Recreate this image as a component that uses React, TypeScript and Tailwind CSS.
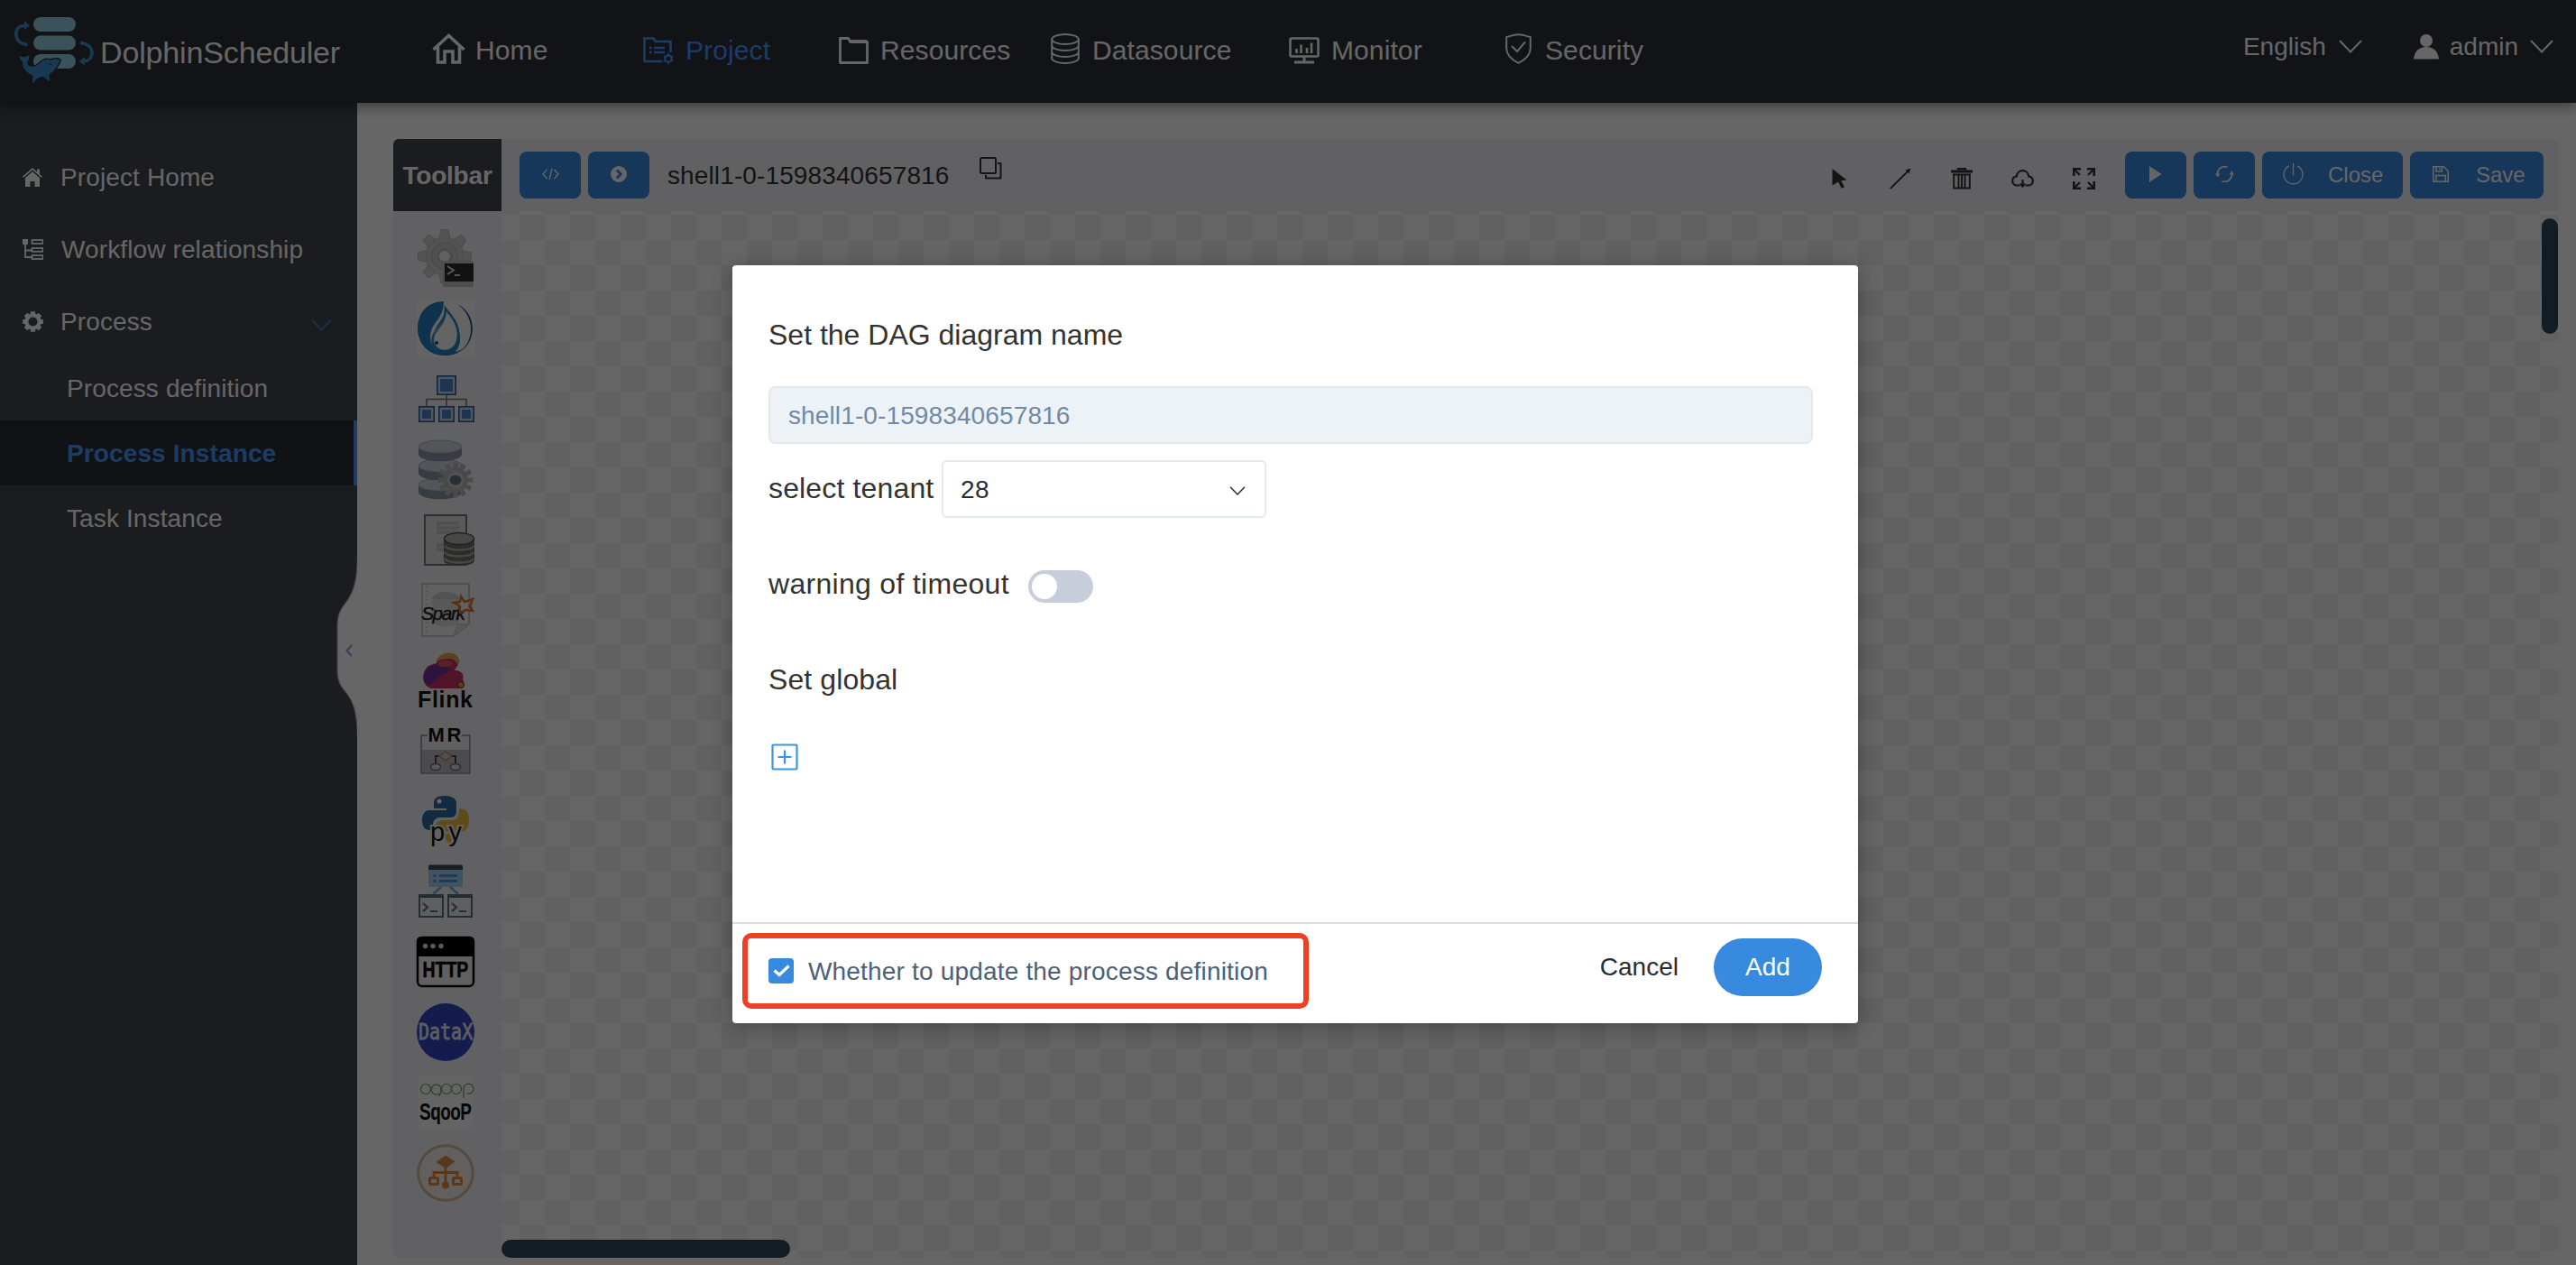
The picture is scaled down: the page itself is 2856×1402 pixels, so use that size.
import React from "react";

type IconProps = { className?: string };

/* ---------- Brand ---------- */

function LogoMark({ className }: IconProps) {
  return (
    <svg className={className} viewBox="0 0 88 76" fill="none">
      <rect x="21" y="0" width="47" height="16" rx="8" fill="#97cce3" />
      <rect x="21" y="20.5" width="47" height="16" rx="8" fill="#97cce3" />
      <rect x="21" y="41" width="47" height="16" rx="8" fill="#97cce3" />
      <path d="M14.5 30.500C5 29.500 1.800 24 1.800 18.500 1.800 13 5 9.500 11 9.500" stroke="#3a92cd" strokeWidth="3.600" />
      <path d="M11 4l6 5.500-6 4.500z" fill="#3a92cd" />
      <path d="M73 28.500c8.500.800 13 5 13 11s-4 9-9 9.500" stroke="#3a92cd" strokeWidth="3.600" />
      <path d="M78 44l-6.500 5L78 53.500z" fill="#3a92cd" />
      <path
        d="M4.500 41.500C8 44 13 44 17 41c.500 4.500-.500 7.500-2.500 10 2.500 4.500 8 4 12 .500 4-4.500 9-6.500 14-4.500 4-2 8.500-1.500 11 .500-1.500 5-4.500 8-7 12-3.500 4-10.500 7-17 8-4 2-6 5.500-7.500 7.500-1-3.500-.800-6.500 0-9.500C12 62 7.500 55.500 8.500 50 6 48 4.500 45 4.500 41.500z"
        fill="#3a92cd"
        stroke="#2d303a"
        strokeWidth="1.400"
      />
      <path d="M32 66.500l7 4.500-.5-8z" fill="#3a92cd" />
      <circle cx="40" cy="52" r="1" fill="#2d303a" />
    </svg>
  );
}

/* ---------- Header icons ---------- */

function HomeIcon({ className }: IconProps) {
  return (
    <svg className={className} viewBox="0 0 37 34" fill="none" stroke="currentColor" strokeWidth="3.600">
      <path d="M1.500 18L18.500 2.500 35.500 18" />
      <path d="M6.500 15v17H14V20h9v12h7.500V15" />
    </svg>
  );
}

function ProjectIcon({ className }: IconProps) {
  return (
    <svg className={className} viewBox="0 0 34 30" fill="none" stroke="currentColor" strokeWidth="2.600">
      <path d="M21 27H1.500V1.500h10L14 5h16.500v12" />
      <path d="M7 12h2.500M12 12h12M7 17h2.500M12 17h12" />
      <circle cx="28" cy="24" r="3.600" strokeWidth="2.200" />
      <path d="M28 18v2.500M28 27.500V30M22.800 21l2.200 1.300M31 25.700l2.300 1.300M22.800 27l2.200-1.300M31 22.300l2.300-1.300" strokeWidth="2" />
    </svg>
  );
}

function FolderIcon({ className }: IconProps) {
  return (
    <svg className={className} viewBox="0 0 33 30" fill="none" stroke="currentColor" strokeWidth="2.800" strokeLinejoin="round">
      <path d="M1.500 1.500h9l2.500 4h18.500v23h-30z" />
      <path d="M11 4.500h20" />
    </svg>
  );
}

function DatabaseIcon({ className }: IconProps) {
  return (
    <svg className={className} viewBox="0 0 32 34" fill="none" stroke="currentColor" strokeWidth="2">
      <ellipse cx="16" cy="6.500" rx="14.800" ry="5.500" />
      <path d="M1.200 6.500v21c0 3 6.600 5.500 14.800 5.500s14.800-2.500 14.800-5.500v-21M1.200 13.500c0 3 6.600 5.500 14.800 5.500s14.800-2.500 14.800-5.500M1.200 20.500c0 3 6.600 5.500 14.800 5.500s14.800-2.500 14.800-5.500" />
    </svg>
  );
}

function MonitorIcon({ className }: IconProps) {
  return (
    <svg className={className} viewBox="0 0 34 30" fill="none" stroke="currentColor" strokeWidth="2.600">
      <rect x="1.500" y="1.500" width="31" height="20" rx="1.500" />
      <path d="M17 22v5M6 28h22" strokeWidth="3" />
      <path d="M8.500 18v-5M13.500 18V8.500M20 18v-6M25 18V6.500" />
    </svg>
  );
}

function ShieldIcon({ className }: IconProps) {
  return (
    <svg className={className} viewBox="0 0 29 34" fill="none" stroke="currentColor" strokeWidth="2">
      <path d="M14.500 1.200c4.500 0 8.500 1.500 13.300 3v12.300c0 7-5.500 12.500-13.300 16.300C6.700 29 1.200 23.500 1.200 16.500V4.200c4.800-1.500 8.800-3 13.300-3z" />
      <path d="M7 14l6 6 9-10.500" />
    </svg>
  );
}

function Chevron({ className, width = 2 }: IconProps & { width?: number }) {
  return (
    <svg className={className} viewBox="0 0 26 15" fill="none" stroke="currentColor" strokeWidth={width}>
      <path d="M1 1l12 12.500L25 1" />
    </svg>
  );
}

function UserIcon({ className }: IconProps) {
  return (
    <svg className={className} viewBox="0 0 28 28" fill="currentColor">
      <circle cx="14" cy="7" r="7" />
      <path d="M0 27.500C.800 19 6 14 14 14s13.200 5 14 13.500z" />
    </svg>
  );
}

/* ---------- Sidebar icons ---------- */

function SmallHomeIcon({ className }: IconProps) {
  return (
    <svg className={className} viewBox="0 0 22 21" fill="currentColor">
      <path d="M11 0l5 4.500V1.500h3v5.600l3 2.700-1 1.200L11 2.300 1 11 0 9.800z" />
      <path d="M11 4.200l8 7V21h-5.500v-6h-5v6H3v-9.800z" />
    </svg>
  );
}

function TreeIcon({ className }: IconProps) {
  return (
    <svg className={className} viewBox="0 0 23 23" fill="none" stroke="currentColor" strokeWidth="1.800">
      <rect x="0" y="0" width="6" height="6" fill="currentColor" stroke="none" />
      <path d="M3 6v14h7M3 12.500h7" />
      <rect x="10.500" y="1" width="12" height="4" />
      <rect x="10.500" y="10" width="12" height="3.800" />
      <rect x="10.500" y="18" width="12" height="4" />
    </svg>
  );
}

function GearIcon({ className }: IconProps) {
  return (
    <svg className={className} viewBox="-11.500 -11.500 23 23" fill="none" stroke="currentColor">
      <circle r="7.200" strokeWidth="4.200" />
      {[0, 45, 90, 135].map((a) => (
        <path key={a} d="M0-11.300v3.500M0 7.800v3.500" strokeWidth="5.200" transform={`rotate(${a})`} />
      ))}
    </svg>
  );
}

/* ---------- Canvas bar icons ---------- */

function CopyIcon({ className }: IconProps) {
  return (
    <svg className={className} viewBox="0 0 25 25" fill="none" stroke="currentColor" strokeWidth="2" strokeLinejoin="round">
      <rect x="1" y="1" width="17" height="17" rx="1.500" />
      <path d="M20 7h3.500v16.500H7V20" />
    </svg>
  );
}

function CursorIcon({ className }: IconProps) {
  return (
    <svg className={className} viewBox="0 0 17 22" fill="currentColor">
      <path d="M.500 0L16.500 12.500l-6.300.800 3.800 7-3.300 1.500-3.600-7.300L.500 18.500z" />
    </svg>
  );
}

function LineIcon({ className }: IconProps) {
  return (
    <svg className={className} viewBox="0 0 24 24" fill="none" stroke="currentColor" strokeWidth="1.800">
      <path d="M.800 23L20 4" />
      <path d="M23.500.500l-2 6-4-4z" fill="currentColor" stroke="none" />
    </svg>
  );
}

function TrashIcon({ className }: IconProps) {
  return (
    <svg className={className} viewBox="0 0 24 24" fill="none" stroke="currentColor" strokeWidth="2.400">
      <path d="M0 4h24" strokeWidth="3" />
      <path d="M8 2.500V1h8v1.500" />
      <path d="M3.200 7.500v15h17.600v-15M8.500 7.500V22M12 7.500V22M15.500 7.500V22M2 7.500h20" strokeWidth="2" />
    </svg>
  );
}

function CloudDownIcon({ className }: IconProps) {
  return (
    <svg className={className} viewBox="0 0 25 21" fill="none" stroke="currentColor" strokeWidth="2.200">
      <path d="M9.500 17.500H6.500C3.500 17.500 1.200 15.400 1.200 12.500c0-2.700 2-4.700 4.600-5C6 3.800 8.800 1.200 12.500 1.200s6.500 2.600 6.700 6.300c2.600.300 4.600 2.300 4.600 5 0 2.900-2.300 5-5.300 5h-3" />
      <path d="M12.500 11v6" />
      <path d="M8.800 15.500h7.400l-3.700 5z" fill="currentColor" stroke="none" />
    </svg>
  );
}

function ExpandIcon({ className }: IconProps) {
  return (
    <svg className={className} viewBox="0 0 25 24" fill="none" stroke="currentColor" strokeWidth="2.600">
      <path d="M1.300 9V1.300H9M16 1.300h7.700V9M1.300 15v7.700H9M16 22.700h7.700V15" />
      <path d="M2 2l6 6M23 2l-6 6M2 22l6-6M23 22l-6-6" strokeWidth="2.200" />
    </svg>
  );
}

function CodeIcon({ className }: IconProps) {
  return (
    <svg className={className} viewBox="0 0 19 14" fill="none" stroke="currentColor" strokeWidth="1.300">
      <path d="M5.500 2L1 7l4.500 5M13.500 2L18 7l-4.500 5M11 1L8 13" />
    </svg>
  );
}

function CircleArrowIcon({ className }: IconProps) {
  return (
    <svg className={className} viewBox="0 0 18 18">
      <circle cx="9" cy="9" r="9" fill="currentColor" />
      <path d="M6.800 4.500L11.300 9l-4.500 4.500" fill="none" stroke="#388ade" strokeWidth="2.800" />
    </svg>
  );
}

function PlayIcon({ className }: IconProps) {
  return (
    <svg className={className} viewBox="0 0 14 18" fill="currentColor">
      <path d="M0 0l13.500 9L0 18z" />
    </svg>
  );
}

function RefreshIcon({ className }: IconProps) {
  return (
    <svg className={className} viewBox="0 0 21 18" fill="none" stroke="currentColor" strokeWidth="1.600">
      <path d="M13.500 1.200A8 8 0 0 0 2.700 10M7.500 16.800A8 8 0 0 0 18.300 8" />
      <path d="M0 8.500h5.400L2.700 12.500zM15.600 9.500H21L18.300 5.500z" fill="currentColor" stroke="none" />
    </svg>
  );
}

function PowerIcon({ className }: IconProps) {
  return (
    <svg className={className} viewBox="0 0 23 24" fill="none" stroke="currentColor" strokeWidth="1.300">
      <path d="M7 2.800a10.500 10.500 0 1 0 9 0M11.500 0v13.500" />
    </svg>
  );
}

function SaveIcon({ className }: IconProps) {
  return (
    <svg className={className} viewBox="0 0 18 18" fill="none" stroke="currentColor" strokeWidth="1.500">
      <path d="M.800.800h11.700l4.700 4.700v11.700H.800z" />
      <path d="M4 1v5h6.500V1M8 2v2.500M3.800 17v-6.500h10.400V17" />
    </svg>
  );
}

/* ---------- Task type icons (64 x 64) ---------- */

const sans = '"Liberation Sans", Arial, sans-serif';
const mono = '"DejaVu Sans Mono", monospace';

function ShellTask() {
  return (
    <g>
      <g transform="translate(31 30)">
        <circle r="22" fill="#d0d0d0" />
        {[0, 45, 90, 135, 180, 225, 270, 315].map((a) => (
          <path key={a} d="M-6-20l2-9.500h8L6-20z" fill="#d0d0d0" stroke="#bbb" transform={`rotate(${a})`} />
        ))}
        <circle r="15" fill="#c8c8c8" stroke="#b4b4b4" />
        <circle r="7.500" fill="#f3f3f7" stroke="#bcbcbc" strokeWidth="3" />
      </g>
      <rect x="29" y="35" width="34" height="29" rx="2" fill="#c0c0c0" />
      <rect x="31" y="38" width="32" height="20" fill="#2e2e2e" />
      <path d="M34 41l7 4.500-7 4.500M42 51h6" stroke="#d8d8d8" strokeWidth="2" fill="none" />
    </g>
  );
}

function WaterdropTask() {
  return (
    <g>
      <rect width="64" height="64" rx="6" fill="#fbfbfb" />
      <path d="M30 2C12 2 1 15 1 32c0 17 12 30 30 30C47 62 50 47 47 35 45 25 37 16 31 8c2 10-6 16-10 24-5 10-3 20 3 25-6-4-11-12-8-22C19 24 30 20 30 2z" fill="#2a7fc0" />
      <path d="M32 10c6 8 14 16 14 28s-6 18-14 19-16-6-14-15c2-10 14-14 14-32z" fill="#fbfbfb" stroke="#2a86c6" strokeWidth="2.500" />
      <path d="M29 20c-1 7-9 12-11 20 4-3 10-9 11-20z" fill="#58a6da" />
      <circle cx="22" cy="48" r="2" fill="#1b5288" />
      <path d="M45 5c21 10 23 40 3 53 17-14 16-40-3-53z" fill="#24568a" />
      <path d="M24 61c12 3 22 0 29-8-8 6-18 7-29 8z" fill="#2a7fc0" />
    </g>
  );
}

function TreeTask() {
  const box = (x: number, y: number, s: number) => (
    <g key={`${x}-${y}`}>
      <rect x={x} y={y} width={s} height={s} fill="#2c5d98" />
      <rect x={x + 1.600} y={y + 1.600} width={s - 3.200} height={s - 3.200} fill="#c3daf2" />
      <rect x={x + 4} y={y + 4} width={s - 8} height={s - 8} fill="#4a86cb" />
    </g>
  );
  return (
    <g>
      <path d="M33 27v14M11 41v-8.500h44V41" stroke="#7a746c" strokeWidth="1.600" fill="none" />
      {box(22, 6, 22)}
      {box(2, 40, 18)}
      {box(24, 40, 18)}
      {box(46, 40, 18)}
    </g>
  );
}

function ProcedureTask() {
  const disk = (y: number) => (
    <g key={y}>
      <path d={`M2 ${y}v8c0 11 48 11 48 0v-8z`} fill="#8796a6" />
      <ellipse cx="26" cy={y} rx="24" ry="7" fill="#cdd6df" stroke="#a7b3bf" />
    </g>
  );
  return (
    <g>
      {[49, 28, 7].map(disk)}
      <g transform="translate(43 44)" fill="#b9b9b9">
        {[0, 30, 60, 90, 120, 150, 180, 210, 240, 270, 300, 330].map((a) => (
          <rect key={a} x="-2.500" y="-19.500" width="5" height="9" transform={`rotate(${a})`} />
        ))}
        <circle r="14" />
        <circle r="9" fill="#d0d0d0" />
        <ellipse rx="6.500" ry="5.500" fill="#62798f" />
      </g>
    </g>
  );
}

function SqlTask() {
  return (
    <g>
      <rect x="9" y="5" width="46" height="55" fill="#e0e0e0" stroke="#777" strokeWidth="2" />
      <path d="M22 14h26M22 19h26M22 24h26M22 38h8M22 43h8" stroke="#c9c9c9" strokeWidth="4" />
      <path d="M30 31v24c0 8 34 8 34 0V31z" fill="#6e6e68" />
      <path d="M31 39c4 6 29 6 32 0M31 46c4 6 29 6 32 0M31 53c4 6 29 6 32 0" stroke="#b0b0a8" strokeWidth="2.500" fill="none" />
      <ellipse cx="47" cy="31" rx="16.500" ry="6.500" fill="#b5b5ae" stroke="#555" strokeWidth="1.500" />
    </g>
  );
}

function SparkTask() {
  return (
    <g>
      <path d="M6 3h52v45L41 61H6z" fill="#f2f2f2" stroke="#b8b8b8" strokeWidth="1.500" />
      <path d="M58 48H45l-4 13" fill="#dcdcdc" stroke="#c3c3c3" />
      <path d="M11 5v54" stroke="#bdbdbd" strokeDasharray="2 3" />
      <ellipse cx="32" cy="20" rx="15" ry="8" fill="#cccccc" />
      <path d="M17 20v25c0 7 30 7 30 0V20z" fill="#dcdcdc" />
      <text x="5" y="43" fontFamily={sans} fontSize="21" fontStyle="italic" fill="#1f1f1f" stroke="#1f1f1f" strokeWidth=".4" textLength="49">
        Spark
      </text>
      <path d="M49 17l4 6 9-3-3 8 3 5-8-1-6 3-1-8-6-3 7-1z" fill="none" stroke="#e0742c" strokeWidth="2.500" />
    </g>
  );
}

function FlinkTask() {
  return (
    <g>
      <path d="M16 41C8 39 5 30 9 21c3-6 9-7 13-8 1-8 8-12 16-11 7 1 10 6 8 12-1 3-3 4-4 7 8 0 11 5 9 10 3 4 1 10-6 10z" fill="#c73464" />
      <path d="M8 33c-2-10 4-18 13-18 8 0 12 4 18 3-3 6-10 6-13 9-4 3-6 8-14 10z" fill="#74309c" />
      <path d="M22 11c2-8 10-10 16-9 8 1 10 7 8 14-2-6-6-8-10-8-5 0-9 1-14 3z" fill="#e3a44a" />
      <path d="M24 12c6-3 13-3 16 1-2 5-8 5-16 3z" fill="#df5462" />
      <circle cx="49" cy="37" r="3.500" fill="#d9a13c" stroke="#5c1a34" />
      <text x="1" y="62" fontFamily={sans} fontSize="25" fontWeight="bold" fill="#111" textLength="61">
        Flink
      </text>
    </g>
  );
}

function MapReduceTask() {
  return (
    <g>
      <rect x="5" y="15" width="54" height="42" fill="#b9bac6" stroke="#8f8fa3" strokeWidth="1.500" />
      <rect x="6" y="16" width="52" height="15" fill="#eeeef2" />
      <rect x="12" y="5" width="38" height="20" fill="#f0f0f4" />
      <text x="12.500" y="22" fontFamily={sans} fontSize="22" fontWeight="bold" fill="#111" textLength="37">
        MR
      </text>
      <path d="M21 46V38h22v8" stroke="#4a4a54" strokeWidth="2" fill="none" />
      <path d="M32 33l7 5-7 5-7-5z" fill="#c9c9d2" stroke="#b98a5c" strokeWidth="1.500" />
      <ellipse cx="21" cy="50" rx="5.500" ry="3.600" fill="#dcdce4" stroke="#6c6c78" strokeWidth="1.500" />
      <ellipse cx="43" cy="50" rx="5.500" ry="3.600" fill="#dcdce4" stroke="#6c6c78" strokeWidth="1.500" />
    </g>
  );
}

function PythonTask() {
  return (
    <g>
      <path
        d="M31 4c-9 0-12 3-12 8v6h14v2H14C8 20 6 26 6 31c0 6 2 10 7 11h5v-6c0-5 4-8 8-8h12c4 0 6-3 6-7v-9c0-5-5-8-13-8z"
        fill="#2f6ba3"
      />
      <circle cx="25" cy="10" r="2.500" fill="#fff" />
      <path d="M47 18c8 0 11 5 11 13 0 7-3 13-10 13H30c-5 0-8-3-10-6 2-5 5-7 9-7h10c6 0 8-5 8-13z" fill="#e8bd3e" />
      <path d="M28 46h14l-6 12z" fill="#e8bd3e" />
      <text x="15" y="54" fontFamily={sans} fontSize="29" fill="#111" stroke="#f3f3f7" strokeWidth="4" paintOrder="stroke" textLength="35" aria-hidden>
        py
      </text>
    </g>
  );
}

function ConditionTask() {
  const term = (x: number) => (
    <g key={x}>
      <rect x={x + 1} y="36" width="26" height="24" fill="#e9edef" stroke="#5b727d" strokeWidth="2" />
      <path d={`M${x} 37h28`} stroke="#5b727d" strokeWidth="4" />
      <path d={`M${x + 5} 45l5 4.500-5 4.500M${x + 13} 54h8`} stroke="#5b727d" strokeWidth="2.200" fill="none" />
    </g>
  );
  return (
    <g>
      <rect x="13" y="3" width="38" height="24" rx="2" fill="#a9cdee" />
      <path d="M13 8V4.500A2 2 0 0 1 15 2.500h34a2 2 0 0 1 2 2V8z" fill="#3b4f5a" />
      <path d="M18.500 14.500h3M25 14.500h20M18.500 20.500h3M25 20.500h20" stroke="#3f8bd6" strokeWidth="2.600" />
      <path d="M27 27l-9 8M37 27l9 8" stroke="#6cabe4" strokeWidth="2.600" />
      {term(2)}
      {term(34)}
    </g>
  );
}

function HttpTask() {
  return (
    <g>
      <rect x="1" y="5" width="62" height="54" rx="5" fill="#efefef" stroke="#000" strokeWidth="2.500" />
      <path d="M0 26V9a5 5 0 0 1 5-5h54a5 5 0 0 1 5 5v17z" fill="#000" />
      <g fill="#e6e6e6">
        <circle cx="9.500" cy="14.500" r="2.700" />
        <circle cx="18" cy="14.500" r="2.700" />
        <circle cx="27" cy="14.500" r="2.700" />
      </g>
      <g transform="translate(6.500 49) scale(1 1.270)">
        <text fontFamily={sans} fontSize="19.500" fontWeight="bold" fill="#000" stroke="#000" strokeWidth=".4">
          HTTP
        </text>
      </g>
    </g>
  );
}

function DataxTask() {
  return (
    <g>
      <circle cx="32" cy="32" r="32" fill="#3448c0" />
      <g transform="translate(2 40) scale(1 1.250)">
        <text fontFamily={mono} fontSize="20" fill="#e9e9f4" stroke="#e9e9f4" strokeWidth=".6">
          DataX
        </text>
      </g>
    </g>
  );
}

function SqoopTask() {
  return (
    <g>
      <rect x="2" y="2" width="60" height="60" fill="#fbfbfb" />
      <g fill="none" stroke="#5da45d" strokeWidth="1.200">
        <circle cx="10" cy="17" r="5.500" />
        <path d="M25 22a5.500 5.500 0 1 1 1-8c2 3 1 7-1 11" />
        <circle cx="33" cy="17" r="5.500" />
        <circle cx="44" cy="17" r="5.500" />
        <path d="M52 27V17a5.500 5.500 0 1 1 4 5" />
      </g>
      <g transform="translate(3 51) scale(1 1.350)">
        <text fontFamily={sans} fontSize="19" fontWeight="bold" fill="#0c0c0c" textLength="58">
          SqooP
        </text>
      </g>
    </g>
  );
}

function DependentTask() {
  return (
    <g>
      <circle cx="32" cy="32" r="30.300" fill="#f3efee" stroke="#d8b79c" strokeWidth="3" />
      <path d="M32 12.500l10.500 7L32 27l-10.500-7z" fill="#e18a45" />
      <path d="M32 25v20M19 37v-5.500h26V37" stroke="#e18a45" strokeWidth="2.800" fill="none" />
      <circle cx="32" cy="45.500" r="4" fill="#e18a45" />
      <rect x="14.500" y="37.500" width="9" height="7" fill="none" stroke="#e18a45" strokeWidth="3" rx="1" />
      <rect x="40.500" y="37.500" width="9" height="7" fill="none" stroke="#e18a45" strokeWidth="3" rx="1" />
    </g>
  );
}

const tasks = [
  ShellTask,
  WaterdropTask,
  TreeTask,
  ProcedureTask,
  SqlTask,
  SparkTask,
  FlinkTask,
  MapReduceTask,
  PythonTask,
  ConditionTask,
  HttpTask,
  DataxTask,
  SqoopTask,
  DependentTask,
];

/* ---------- Page sections ---------- */

function Header() {
  return (
    <header className="relative z-10 flex h-[114px] shrink-0 items-start bg-[#2d303a] text-white shadow-[0_4px_14px_rgba(0,0,0,0.43)]">
      <div className="flex w-[479px] shrink-0 pl-4 pt-[19px]">
        <LogoMark className="h-[76px] w-[88px]" />
        <span className="ml-[7px] mt-[20px] text-[34px] leading-[38px] tracking-[-0.15px]">DolphinScheduler</span>
      </div>
      <nav className="flex h-[112px] items-center text-[30px] tracking-[0.1px]">
        <a className="flex w-[234px] items-center">
          <HomeIcon className="mr-[11px] mt-[-4px] h-[34px] w-[37px]" />
          Home
        </a>
        <a className="flex w-[217px] items-center text-[#4697fb]">
          <ProjectIcon className="mr-[13px] h-[30px] w-[34px]" />
          Project
        </a>
        <a className="flex w-[235px] items-center">
          <FolderIcon className="mr-[13px] h-[30px] w-[33px]" />
          Resources
        </a>
        <a className="flex w-[264px] items-center">
          <DatabaseIcon className="mr-[14px] mt-[-4px] h-[34px] w-8" />
          Datasource
        </a>
        <a className="flex w-[240px] items-center">
          <MonitorIcon className="mr-[13px] h-[30px] w-[34px]" />
          Monitor
        </a>
        <a className="flex items-center">
          <ShieldIcon className="mr-[15px] mt-[-4px] h-[34px] w-[29px]" />
          Security
        </a>
      </nav>
      <div className="ml-auto flex h-[103px] items-center pr-[25px] text-[28px]">
        <span>English</span>
        <Chevron className="ml-[14px] h-[15px] w-[26px]" />
        <UserIcon className="ml-[57px] h-7 w-7" />
        <span className="ml-[12px]">admin</span>
        <Chevron className="ml-[13px] h-[15px] w-[26px]" />
      </div>
    </header>
  );
}

function Sidebar() {
  return (
    <aside className="relative w-[396px] shrink-0 bg-[#43464e] pt-[42px] text-[28px] tracking-[0.12px] text-white">
      <a className="flex h-20 items-center pl-[25px]">
        <SmallHomeIcon className="mr-[20px] h-[21px] w-[22px]" />
        <span className="pt-[2px]">Project Home</span>
      </a>
      <a className="flex h-20 items-center pl-[25px]">
        <TreeIcon className="mr-[20px] h-[23px] w-[23px]" />
        <span className="pt-[2px]">Workflow relationship</span>
      </a>
      <a className="flex h-[78px] items-center pl-[25px] pt-[2px]">
        <GearIcon className="mr-[19px] h-[23px] w-[23px]" />
        <span className="pt-[2px]">Process</span>
        <Chevron className="ml-auto mr-7 mt-[8px] h-[13px] w-[23px] text-[#3f7ab8]" />
      </a>
      <a className="flex h-[72px] items-center pl-[74px] pt-[2px]">Process definition</a>
      <a className="flex h-[72px] items-center border-r-4 border-[#4697fb] bg-[#2b2e35] pl-[74px] pt-[2px] font-bold text-[#4697fb]">
        Process Instance
      </a>
      <a className="flex h-[72px] items-center pl-[74px] pt-[2px]">Task Instance</a>
      <div className="absolute right-0 top-[500px] flex h-[206px] w-[23px] items-center justify-center">
        <svg className="absolute inset-0" viewBox="0 0 23 206" fill="#fff" stroke="#a6a6c8" strokeWidth="1.200">
          <path d="M23.600 0C23 30 19 42 11 53 4 62 1 68 1 78v52c0 10 3 16 10 24 8 10 12 22 12.600 52z" />
        </svg>
        <svg className="relative left-[2px] top-[4px] h-[14px] w-[8px]" viewBox="0 0 8 14" fill="none" stroke="#7d9fd6" strokeWidth="2">
          <path d="M7 1L1.500 7 7 13" />
        </svg>
      </div>
    </aside>
  );
}

const blueButton = "flex h-[52px] items-center rounded-[8px] bg-[#388ade] text-[24px] text-white";

function Workspace() {
  return (
    <main className="flex grow flex-col pb-2 pl-10 pr-5 pt-10">
      <div className="flex h-20 shrink-0 overflow-hidden rounded-t-[6px] bg-[#f3f3f7]">
        <div className="flex w-[120px] shrink-0 items-center justify-center bg-[#43464e] pt-[2px] text-[28px] font-bold tracking-[-0.2px] text-white">
          Toolbar
        </div>
        <div className="flex grow items-center gap-2 pl-5 pr-4">
          <button className={blueButton + " w-[68px] justify-center"}>
            <CodeIcon className="mt-[-2px] h-[14px] w-[19px]" />
          </button>
          <button className={blueButton + " w-[68px] justify-center"}>
            <CircleArrowIcon className="mt-[-2px] h-[18px] w-[18px]" />
          </button>
          <span className="ml-[12px] pt-[2px] text-[28px] tracking-[0.12px] text-[#333]">shell1-0-1598340657816</span>
          <CopyIcon className="mb-[16px] ml-[26px] h-[25px] w-[25px] text-[#333]" />
          <div className="ml-auto mr-[25px] flex items-center pt-[8px] text-[#333]">
            <CursorIcon className="mr-[47px] h-[22px] w-[17px]" />
            <LineIcon className="mr-[44px] h-6 w-6" />
            <TrashIcon className="mr-[43px] h-6 w-6" />
            <CloudDownIcon className="mr-[43px] h-[21px] w-[25px]" />
            <ExpandIcon className="h-6 w-[25px]" />
          </div>
          <button className={blueButton + " w-[68px] justify-center"}>
            <PlayIcon className="mt-[-2px] h-[18px] w-[14px]" />
          </button>
          <button className={blueButton + " w-[68px] justify-center"}>
            <RefreshIcon className="mt-[-2px] h-[18px] w-[21px]" />
          </button>
          <button className={blueButton + " w-[156px] pl-[23px]"}>
            <PowerIcon className="mr-[27px] mt-[-3px] h-6 w-[23px]" />
            Close
          </button>
          <button className={blueButton + " w-[148px] pl-[25px]"}>
            <SaveIcon className="mr-[30px] mt-[-2px] h-[18px] w-[18px]" />
            Save
          </button>
        </div>
      </div>
      <div className="flex grow">
        <div className="flex w-[120px] shrink-0 flex-col items-center gap-[14px] rounded-bl-[6px] bg-[#f3f3f7] pr-[4px] pt-5">
          {tasks.map((Task, i) => (
            <svg key={i} className="h-16 w-16 shrink-0 overflow-visible" viewBox="0 0 64 64">
              <Task />
            </svg>
          ))}
        </div>
        <div className="flex grow flex-col justify-between bg-[conic-gradient(#fff_25%,#f3f3f3_0_50%,#fff_0_75%,#f3f3f3_0)] bg-[length:56px_56px] bg-[position:20px_4px] pt-2">
          <div className="h-32 w-[18px] self-end rounded-full bg-[#2f465c]" />
          <div className="h-5 w-80 rounded-full bg-[#2f465c]" />
        </div>
      </div>
    </main>
  );
}

function Dialog() {
  return (
    <section className="absolute left-[812px] top-[294px] flex h-[840px] w-[1248px] flex-col rounded-[4px] bg-white text-[#333] shadow-[0_4px_24px_rgba(0,0,0,0.3)]">
      <div className="h-[728px] pl-10 pr-[50px] pt-[58px] text-[32px] leading-[38px]">
        <h2>Set the DAG diagram name</h2>
        <div className="mt-[38px] flex h-16 items-center rounded-[8px] border-2 border-[#e2e8f0] bg-[#edf2f7] pl-[20px] pt-[2px] text-[28px] tracking-[0.12px] text-[#718aa5]">
          shell1-0-1598340657816
        </div>
        <div className="mt-[18px] flex h-16 items-center">
          <span className="mt-[-2px] w-48 shrink-0 tracking-[0.15px]">select tenant</span>
          <div className="flex h-16 w-[360px] items-center rounded-[6px] border-2 border-[#e2e8f0] pl-[19px] text-[28px] tracking-[0.5px] text-[#252d3a]">
            <span className="pt-[2px]">28</span>
            <Chevron className="ml-auto mr-[21px] mt-[3px] h-[10px] w-[18px]" width={2.2} />
          </div>
        </div>
        <div className="mt-[54px] flex h-[38px] items-center">
          <span className="tracking-[0.3px]">warning of timeout</span>
          <span className="ml-auto mr-[798px] mt-[6px] flex h-9 w-[72px] shrink-0 items-center rounded-full bg-[#c8ced9] pl-1">
            <span className="h-7 w-7 rounded-full bg-white" />
          </span>
        </div>
        <h2 className="mt-[68px] tracking-[0.1px]">Set global</h2>
        <svg className="ml-[3px] mt-[52px] h-[30px] w-[30px]" viewBox="0 0 30 30" fill="none" stroke="#3a96de" strokeWidth="2.200">
          <rect x="1.500" y="1.500" width="27" height="27" rx="1" />
          <path d="M15 7.500v15M7.500 15h15" />
        </svg>
      </div>
      <footer className="flex h-28 items-start border-t-2 border-[#dcdcdc] text-[28px]">
        <div className="ml-[11px] mt-[10px] flex h-[84px] w-[628px] items-center rounded-[10px] border-[6px] border-[#ec4125] pl-[23px] text-[#4d6076]">
          <span className="mr-4 flex h-7 w-7 shrink-0 items-center justify-center rounded-[4px] bg-[#388ade]">
            <svg className="h-[14px] w-[19px]" viewBox="0 0 19 14" fill="none" stroke="#fff" strokeWidth="3.200">
              <path d="M1.500 6.500l5.500 5L17.500 1.500" />
            </svg>
          </span>
          <span className="whitespace-nowrap pt-[2px] tracking-[0.18px]">Whether to update the process definition</span>
        </div>
        <button className="ml-auto mr-[39px] mt-4 h-16 text-[#252d3a]">Cancel</button>
        <button className="mr-10 mt-4 h-16 w-[120px] rounded-full bg-[#388ade] text-white">Add</button>
      </footer>
    </section>
  );
}

export default function App() {
  return (
    <div className="relative flex h-[1402px] w-[2856px] flex-col overflow-hidden bg-white font-['Liberation_Sans',Arial,sans-serif] leading-none">
      <Header />
      <div className="flex grow">
        <Sidebar />
        <Workspace />
      </div>
      <div className="absolute inset-0 z-20 bg-black/60">
        <Dialog />
      </div>
    </div>
  );
}
